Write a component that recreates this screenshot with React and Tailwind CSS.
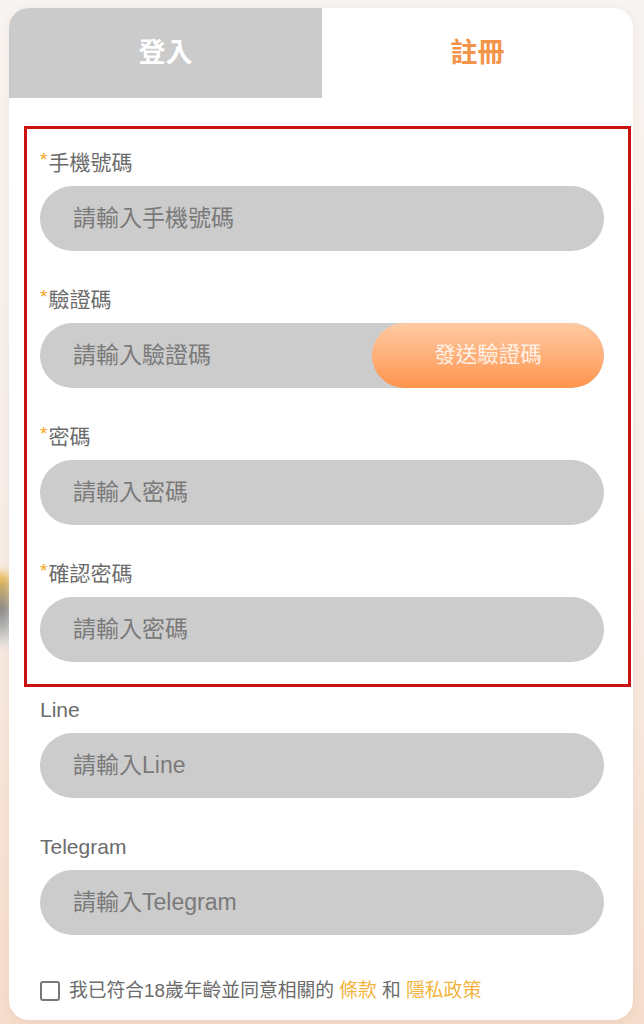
import React from 'react';

const font = { fontFamily: '"Liberation Sans", "Noto Sans CJK TC", "Noto Sans", sans-serif' };

const Field = ({ label, required, placeholder, children, className = '' }) => {
  return (
    <div className={className}>
      <div className="h-[27px] leading-[27px] text-[21px] text-[#6b6b6b] flex items-start">
        {required && <span className="text-[#f5a623] text-[19px] leading-[22px] mr-[1px]">*</span>}
        <span>{label}</span>
      </div>
      <div className="mt-[10px] h-[65px] rounded-full bg-[#cccccc] flex items-center justify-between overflow-hidden">
        <span className="pl-[33px] text-[23px] text-[#7a7a7a]">{placeholder}</span>
        {children}
      </div>
    </div>
  );
};

const App = () => {
  return (
    <div
      className="relative min-h-[1024px] w-full overflow-hidden bg-gradient-to-b from-[#f8f4f1] via-[#f7eee8] to-[#f6dccb] pt-[8px] pl-[9px] pr-[11px]"
      style={font}
    >
      {/* blurry decoration peeking out on the left */}
      <div className="absolute left-[-12px] top-[572px] h-[75px] w-[24px] rounded-full bg-gradient-to-b from-[#f7c23a] via-[#8a8a8a] to-[#e8e8e8] blur-[5px]" />

      <div className="relative bg-white rounded-[20px] overflow-hidden shadow-[0_2px_10px_rgba(200,150,120,0.15)] pb-[15px]">
        <div className="flex h-[90px]">
          <div className="w-[313px] bg-[#cbcbcb] flex items-center justify-center text-white text-[27px] font-bold">
            登入
          </div>
          <div className="flex-1 flex items-center justify-center text-[#f29449] text-[27px] font-bold">
            註冊
          </div>
        </div>

        <div className="pl-[31px] pr-[29px]">
          <div className="mt-[28px] -ml-[16px] -mr-[27px] border-[3px] border-[#cc1111] pl-[13px] pr-[24px] pt-[20px] pb-[22px]">
            <Field label="手機號碼" required placeholder="請輸入手機號碼" />
            <Field className="mt-[35px]" label="驗證碼" required placeholder="請輸入驗證碼">
              <button className="h-full w-[232px] rounded-full bg-gradient-to-b from-[#ffcaa3] to-[#ff944a] text-[21.5px] text-[#fff1e6]">
                發送驗證碼
              </button>
            </Field>
            <Field className="mt-[35px]" label="密碼" required placeholder="請輸入密碼" />
            <Field className="mt-[35px]" label="確認密碼" required placeholder="請輸入密碼" />
          </div>

          <Field className="mt-[9px]" label="Line" placeholder="請輸入Line" />
          <Field className="mt-[35px]" label="Telegram" placeholder="請輸入Telegram" />

          <label className="mt-[42px] flex items-center gap-[9px] text-[18.8px] text-[#6b6b6b]">
            <span className="w-[20px] h-[20px] rounded-[3px] border-2 border-[#777777] bg-white" />
            <span>
              我已符合18歲年齡並同意相關的 <span className="text-[#f2b43c]">條款</span> 和{' '}
              <span className="text-[#f2b43c]">隱私政策</span>
            </span>
          </label>
        </div>
      </div>
    </div>
  );
};

export default App;
